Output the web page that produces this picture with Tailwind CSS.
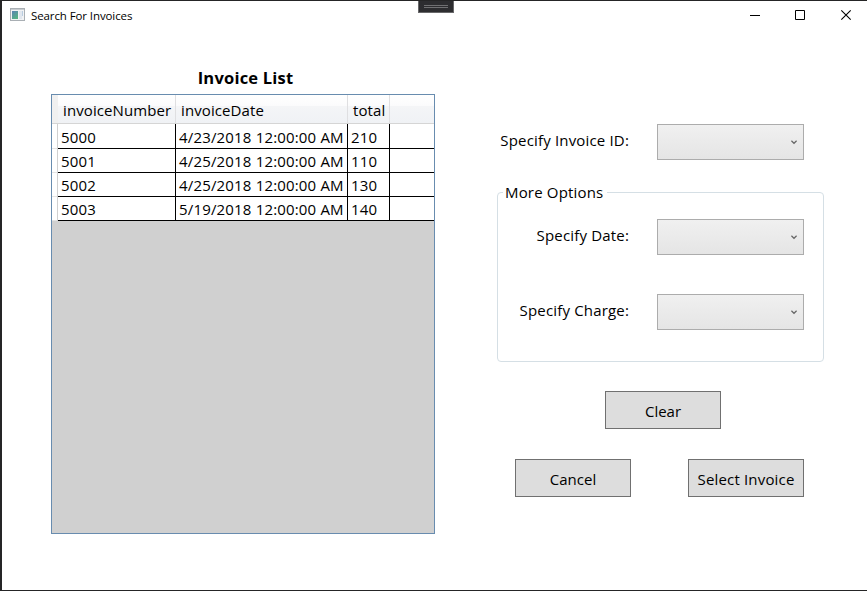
<!DOCTYPE html>
<html lang="en">
<head>
<meta charset="utf-8">
<title>Search For Invoices</title>
<script src="https://cdn.jsdelivr.net/npm/@tailwindcss/browser@4"></script>
</head>
<body class="relative w-[867px] h-[591px] overflow-hidden bg-white border-t border-b border-l-2 border-[#252526] text-black text-[15px] leading-6 tracking-[0.17px] font-['Open_Sans','Noto_Sans',sans-serif]">
  <!-- Debug toolbar handle -->
  <div class="absolute left-[416px] -top-px w-9 h-[13px] bg-[#2d2d30] border border-[#68686a] flex flex-col items-center pt-1 gap-px">
    <div class="w-6 h-px bg-[#707072]"></div>
    <div class="w-6 h-px bg-[#707072]"></div>
  </div>

  <header class="flex h-[30px] items-start">
    <svg class="ml-2 mt-[7px]" width="15" height="13" viewBox="0 0 15 13">
      <defs><linearGradient id="pane" x1="0" y1="0" x2="0.6" y2="1"><stop offset="0" stop-color="#5a82b4"/><stop offset="1" stop-color="#55b184"/></linearGradient></defs>
      <rect x=".5" y=".5" width="14" height="12" fill="#f1f2f4" stroke="#a9afb4"/>
      <rect x="1" y="1" width="13" height="1" fill="#c8ccd0"/>
      <rect x="2" y="3" width="6" height="8" fill="url(#pane)"/>
      <rect x="9" y="3" width="3" height="8" fill="#e0e6ee"/>
      <rect x="12" y="3" width="1" height="5" fill="#b9cde0"/>
    </svg>
    <h1 class="ml-[6px] mt-[7px] text-[11.5px] leading-4 tracking-[-0.1px] whitespace-nowrap">Search For Invoices</h1>
    <div class="ml-auto flex">
      <svg width="46" height="29" viewBox="0 0 46 29"><path d="M21 14.5h10" stroke="#000" fill="none"/></svg>
      <svg width="46" height="29" viewBox="0 0 46 29"><path d="M20.500 9.500h9v9h-9z" stroke="#000" fill="none"/></svg>
      <svg width="46" height="29" viewBox="0 0 46 29"><path d="M20.300 9.300l9.400 9.400M29.700 9.300l-9.400 9.400" stroke="#000" stroke-width="1.100" fill="none"/></svg>
    </div>
  </header>

  <main class="flex pl-[49px]">
    <section class="w-[384px] pt-[33px]">
      <h2 class="pl-[5px] text-center text-[16.500px] font-bold leading-7 tracking-[0.2px]">Invoice List</h2>
      <div class="mt-[2px] h-[440px] border border-[#688caf] bg-[#d0d0d0]">
        <div class="flex h-[29px] border-b border-[#d5d5d5] bg-[linear-gradient(#fff_0%,#fbfbfc_40%,#f4f5f7_41%,#f0f2f5_100%)] leading-[31px] tracking-[0.1px] whitespace-nowrap">
          <div class="w-[6px] bg-[#f0f0f0]"></div>
          <div class="w-[118px] border-r border-[#dfdfe1] pl-[5px]">invoiceNumber</div>
          <div class="w-[172px] border-r border-[#dfdfe1] pl-[5px]">invoiceDate</div>
          <div class="w-[42px] border-r border-[#dfdfe1] pl-[5px]">total</div>
        </div>
        <div class="flex h-[97px] whitespace-nowrap">
          <div class="grid grid-rows-[25px_24px_24px_24px] w-[6px] bg-white border-r border-[#d0d0d0]">
            <div class="border-b border-[#e4e4e4]"></div>
            <div class="border-b border-[#e4e4e4]"></div>
            <div class="border-b border-[#e4e4e4]"></div>
            <div class="border-b border-[#e4e4e4]"></div>
          </div>
          <div class="grid grid-cols-[118px_172px_42px_44px] grid-rows-[25px_24px_24px_24px] leading-[25px] bg-white *:border-b *:border-black">
            <div class="border-r pl-[3px] leading-[27px]">5000</div><div class="border-r pl-[3px] leading-[27px]">4/23/2018 12:00:00 AM</div><div class="border-r pl-[3px] leading-[27px]">210</div><div></div>
            <div class="border-r pl-[3px]">5001</div><div class="border-r pl-[3px]">4/25/2018 12:00:00 AM</div><div class="border-r pl-[3px]">110</div><div></div>
            <div class="border-r pl-[3px]">5002</div><div class="border-r pl-[3px]">4/25/2018 12:00:00 AM</div><div class="border-r pl-[3px]">130</div><div></div>
            <div class="border-r pl-[3px]">5003</div><div class="border-r pl-[3px]">5/19/2018 12:00:00 AM</div><div class="border-r pl-[3px]">140</div><div></div>
          </div>
        </div>
      </div>
    </section>

    <section class="ml-[62px] w-[327px] pt-[93px]">
      <div class="flex h-9 items-center justify-end pr-5">
        <span class="mr-[28px] -mt-[5px]">Specify Invoice ID:</span>
        <div class="flex h-9 w-[147px] items-center justify-end border border-[#acacac] bg-linear-to-b from-[#f0f0f0] to-[#e5e5e5] pr-[6px]">
          <svg class="-mt-px" width="6" height="6" viewBox="0 0 6 6"><path d="M.4 1.800L3 4.300 5.600 1.800" fill="none" stroke="#666" stroke-width="1.200"/></svg>
        </div>
      </div>
      <fieldset class="mt-5 h-[182px] rounded-[4px] border border-[#d5dfe5] pr-[19px]">
        <legend class="ml-[5px] pl-[2px] pr-1 leading-6">More Options</legend>
        <div class="mt-[15px] flex h-9 items-center justify-end">
          <span class="mr-[28px] -mt-[5px]">Specify Date:</span>
          <div class="flex h-9 w-[147px] items-center justify-end border border-[#acacac] bg-linear-to-b from-[#f0f0f0] to-[#e5e5e5] pr-[6px]">
            <svg class="-mt-px" width="6" height="6" viewBox="0 0 6 6"><path d="M.4 1.800L3 4.300 5.600 1.800" fill="none" stroke="#666" stroke-width="1.200"/></svg>
          </div>
        </div>
        <div class="mt-[39px] flex h-9 items-center justify-end">
          <span class="mr-[28px] -mt-[5px]">Specify Charge:</span>
          <div class="flex h-9 w-[147px] items-center justify-end border border-[#acacac] bg-linear-to-b from-[#f0f0f0] to-[#e5e5e5] pr-[6px]">
            <svg class="-mt-px" width="6" height="6" viewBox="0 0 6 6"><path d="M.4 1.800L3 4.300 5.600 1.800" fill="none" stroke="#666" stroke-width="1.200"/></svg>
          </div>
        </div>
      </fieldset>
      <button class="ml-[108px] mt-[29px] block h-[38px] w-[116px] border border-[#707070] bg-[#ddd] pt-px tracking-normal">Clear</button>
      <div class="mt-[30px] flex justify-between pl-[18px] pr-5">
        <button class="h-[38px] w-[116px] border border-[#707070] bg-[#ddd] pt-px tracking-normal">Cancel</button>
        <button class="h-[38px] w-[116px] whitespace-nowrap border border-[#707070] bg-[#ddd] pt-px">Select Invoice</button>
      </div>
    </section>
  </main>
</body>
</html>
